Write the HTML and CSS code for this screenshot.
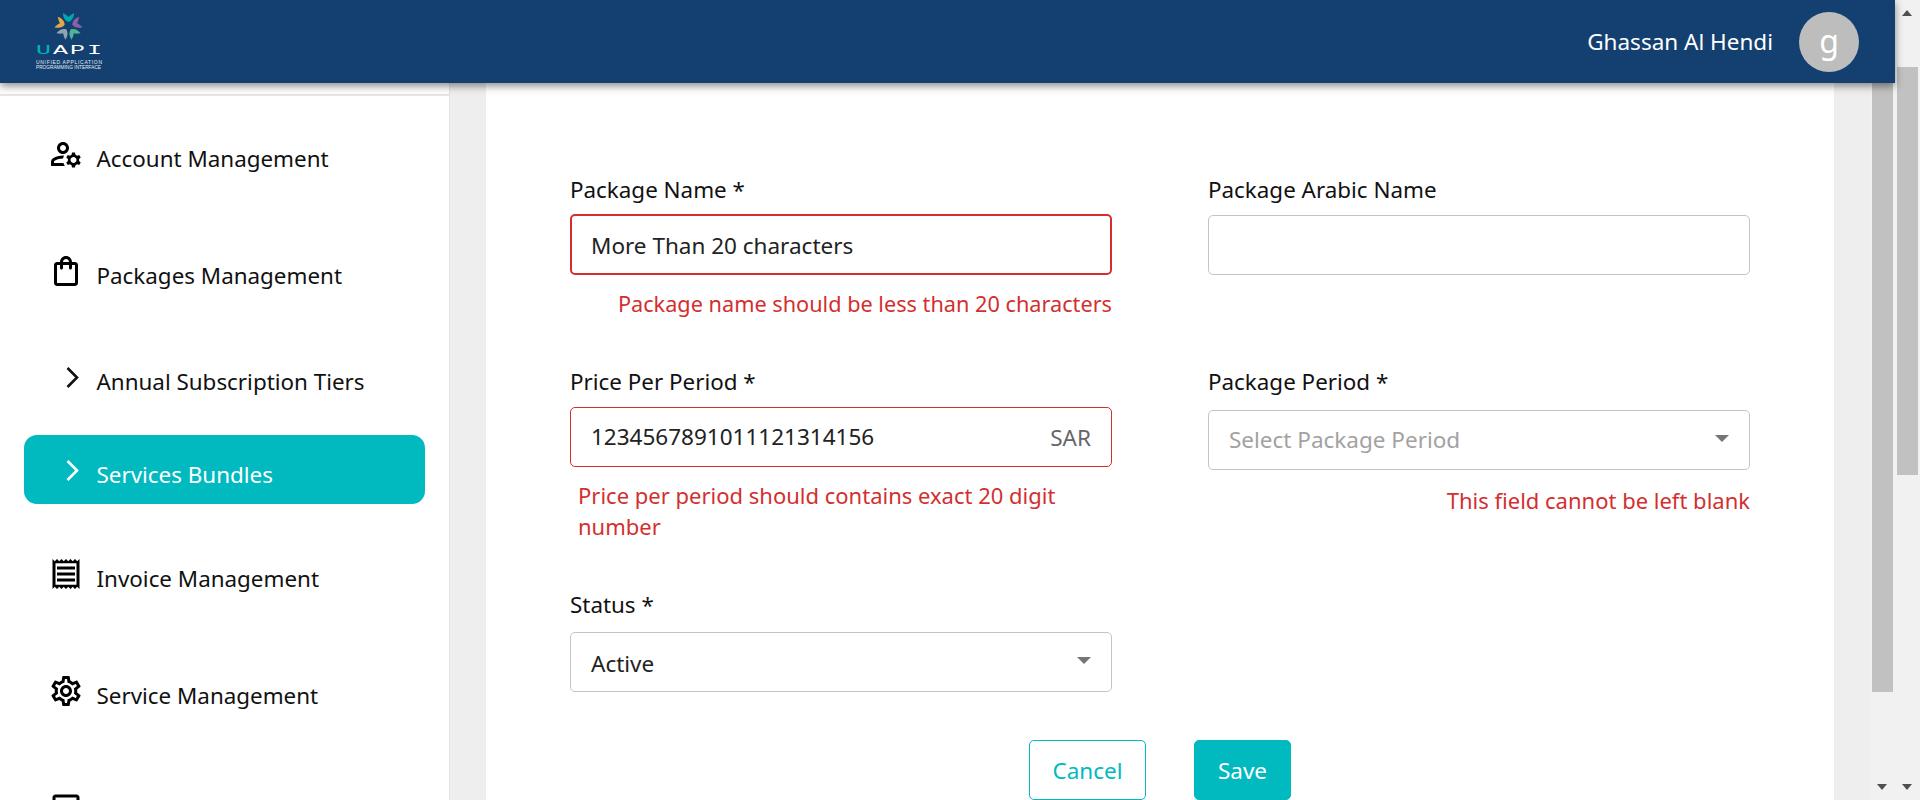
FILE: index.html
```html
<!DOCTYPE html>
<html lang="en">
<head>
<meta charset="utf-8">
<title>Services Bundles</title>
<link rel="stylesheet" href="styles.css">
</head>
<body>
<div class="app">
  <div class="window">
    <header class="topbar">
      <svg class="logo" viewBox="0 0 72 83" width="72" height="83" aria-label="UAPI">
        <g transform="translate(32.5 26)">
          <path class="petal p1" d="M-5.5 -13C-5.5 -8 -3 -5 0 -4C3 -5 5.5 -8 5.5 -13C4 -12 1.5 -11 0 -9C-1.5 -11 -4 -12 -5.5 -13Z"/>
          <path class="petal p2" transform="rotate(72)" d="M-5.5 -13C-5.5 -8 -3 -5 0 -4C3 -5 5.5 -8 5.5 -13C4 -12 1.5 -11 0 -9C-1.5 -11 -4 -12 -5.5 -13Z"/>
          <path class="petal p3" transform="rotate(144)" d="M-5.5 -13C-5.5 -8 -3 -5 0 -4C3 -5 5.5 -8 5.5 -13C4 -12 1.5 -11 0 -9C-1.5 -11 -4 -12 -5.5 -13Z"/>
          <path class="petal p4" transform="rotate(216)" d="M-5.5 -13C-5.5 -8 -3 -5 0 -4C3 -5 5.5 -8 5.5 -13C4 -12 1.5 -11 0 -9C-1.5 -11 -4 -12 -5.5 -13Z"/>
          <path class="petal p5" transform="rotate(288)" d="M-5.5 -13C-5.5 -8 -3 -5 0 -4C3 -5 5.5 -8 5.5 -13C4 -12 1.5 -11 0 -9C-1.5 -11 -4 -12 -5.5 -13Z"/>
        </g>
        <text class="wordmark wm-u" x="0" y="54" textLength="15" lengthAdjust="spacingAndGlyphs">U</text>
        <text class="wordmark" x="17" y="54" textLength="15" lengthAdjust="spacingAndGlyphs">A</text>
        <text class="wordmark" x="34" y="54" textLength="15" lengthAdjust="spacingAndGlyphs">P</text>
        <text class="wordmark" x="51" y="54" textLength="15" lengthAdjust="spacingAndGlyphs">I</text>
        <text class="tagline" x="0" y="63.5" textLength="66" lengthAdjust="spacing">UNIFIED APPLICATION</text>
        <text class="tagline" x="0" y="69" textLength="65" lengthAdjust="spacingAndGlyphs">PROGRAMMING INTERFACE</text>
      </svg>
      <div class="user">
        <span class="user-name">Ghassan Al Hendi</span>
        <span class="avatar">g</span>
      </div>
    </header>
    <div class="body-row">
      <aside class="sidebar">
        <div class="sidebar-top"></div>
        <nav class="nav">
          <a class="nav-item item-account">
            <svg class="icon" viewBox="0 0 24 24"><path d="M4 18v-.65c0-.34.16-.66.41-.81C6.1 15.53 8.03 15 10 15c.03 0 .05 0 .08.01.1-.7.3-1.37.59-1.98-.22-.02-.44-.03-.67-.03-2.42 0-4.68.67-6.61 1.82C2.51 15.34 2 16.32 2 17.35V20h9.26c-.42-.6-.75-1.28-.97-2H4zm6-6c2.21 0 4-1.79 4-4s-1.79-4-4-4-4 1.79-4 4 1.79 4 4 4zm0-6c1.1 0 2 .9 2 2s-.9 2-2 2-2-.9-2-2 .9-2 2-2zm10.75 10c0-.22-.03-.42-.06-.63l1.14-1.01-1-1.73-1.45.49c-.32-.27-.68-.48-1.08-.63L18 11h-2l-.3 1.49c-.4.15-.76.36-1.08.63l-1.45-.49-1 1.73 1.14 1.01c-.03.21-.06.41-.06.63s.03.42.06.63l-1.14 1.01 1 1.73 1.45-.49c.32.27.68.48 1.08.63L16 21h2l.3-1.49c.4-.15.76-.36 1.08-.63l1.45.49 1-1.73-1.14-1.01c.03-.21.06-.41.06-.63zM17 18c-1.1 0-2-.9-2-2s.9-2 2-2 2 .9 2 2-.9 2-2 2z"/></svg>
            <span class="nav-label">Account Management</span>
          </a>
          <a class="nav-item item-packages">
            <svg class="icon" viewBox="0 0 24 24"><path d="M18 6h-2c0-2.21-1.79-4-4-4S8 3.79 8 6H6c-1.1 0-2 .9-2 2v12c0 1.1.9 2 2 2h12c1.1 0 2-.9 2-2V8c0-1.1-.9-2-2-2zm-6-2c1.1 0 2 .9 2 2h-4c0-1.1.9-2 2-2zm6 16H6V8h2v2c0 .55.45 1 1 1s1-.45 1-1V8h4v2c0 .55.45 1 1 1s1-.45 1-1V8h2v12z"/></svg>
            <span class="nav-label">Packages Management</span>
          </a>
          <a class="sub-item">
            <svg class="chevron" viewBox="0 0 36 36"><path d="M19.5 9L29 18.5L19.5 28"/></svg>
            <span class="nav-label">Annual Subscription Tiers</span>
          </a>
          <a class="sub-item is-active">
            <svg class="chevron" viewBox="0 0 36 36"><path d="M19.5 9L29 18.5L19.5 28"/></svg>
            <span class="nav-label">Services Bundles</span>
          </a>
          <a class="nav-item item-invoice">
            <svg class="icon" viewBox="0 0 24 24"><path d="M19.5 3.5L18 2l-1.5 1.5L15 2l-1.5 1.5L12 2l-1.5 1.5L9 2 7.5 3.5 6 2 4.5 3.5 3 2v20l1.5-1.5L6 22l1.5-1.5L9 22l1.5-1.5L12 22l1.5-1.5L15 22l1.5-1.5L18 22l1.5-1.5L21 22V2l-1.5 1.5zM19 19.09H5V4.91h14v14.18zM6 15h12v2H6zm0-4h12v2H6zm0-4h12v2H6z"/></svg>
            <span class="nav-label">Invoice Management</span>
          </a>
          <a class="nav-item">
            <svg class="icon" viewBox="0 0 24 24"><path d="M19.43 12.98c.04-.32.07-.64.07-.98 0-.34-.03-.66-.07-.98l2.11-1.65c.19-.15.24-.42.12-.64l-2-3.46c-.09-.16-.26-.25-.44-.25-.06 0-.12.01-.17.03l-2.49 1c-.52-.4-1.08-.73-1.69-.98l-.38-2.65C14.46 2.18 14.25 2 14 2h-4c-.25 0-.46.18-.49.42l-.38 2.65c-.61.25-1.17.59-1.69.98l-2.49-1c-.06-.02-.12-.03-.18-.03-.17 0-.34.09-.43.25l-2 3.46c-.13.22-.07.49.12.64l2.11 1.65c-.04.32-.07.65-.07.98 0 .33.03.66.07.98l-2.11 1.65c-.19.15-.24.42-.12.64l2 3.46c.09.16.26.25.44.25.06 0 .12-.01.17-.03l2.49-1c.52.4 1.08.73 1.69.98l.38 2.65c.03.24.24.42.49.42h4c.25 0 .46-.18.49-.42l.38-2.65c.61-.25 1.17-.59 1.69-.98l2.49 1c.06.02.12.03.18.03.17 0 .34-.09.43-.25l2-3.46c.12-.22.07-.49-.12-.64l-2.11-1.65zm-1.98-1.71c.04.31.05.52.05.73 0 .21-.02.43-.05.73l-.14 1.13.89.7 1.08.84-.7 1.21-1.27-.51-1.04-.42-.9.68c-.43.32-.84.56-1.25.73l-1.06.43-.16 1.13-.2 1.35h-1.4l-.19-1.35-.16-1.13-1.06-.43c-.43-.18-.83-.41-1.23-.71l-.91-.7-1.06.43-1.27.51-.7-1.21 1.08-.84.89-.7-.14-1.13c-.03-.31-.05-.54-.05-.74s.02-.43.05-.73l.14-1.13-.89-.7-1.08-.84.7-1.21 1.27.51 1.04.42.9-.68c.43-.32.84-.56 1.25-.73l1.06-.43.16-1.13.2-1.35h1.39l.19 1.35.16 1.13 1.06.43c.43.18.83.41 1.23.71l.91.7 1.06-.43 1.27-.51.7 1.21-1.07.85-.89.7.14 1.13zM12 8c-2.21 0-4 1.79-4 4s1.79 4 4 4 4-1.79 4-4-1.79-4-4-4zm0 6c-1.1 0-2-.9-2-2s.9-2 2-2 2 .9 2 2-.9 2-2 2z"/></svg>
            <span class="nav-label">Service Management</span>
          </a>
          <a class="nav-item">
            <svg class="icon" viewBox="0 0 24 24"><path d="M19 5v14H5V5h14m0-2H5c-1.1 0-2 .9-2 2v14c0 1.1.9 2 2 2h14c1.1 0 2-.9 2-2V5c0-1.1-.9-2-2-2z"/></svg>
          </a>
        </nav>
      </aside>
      <main class="content">
        <section class="card">
          <form class="form">
            <div class="form-grid">
              <div class="field field-a">
                <label class="label">Package Name *</label>
                <div class="control is-focus-error"><span class="value value-low">More Than 20 characters</span></div>
                <p class="error align-right">Package name should be less than 20 characters</p>
              </div>
              <div class="field field-b">
                <label class="label">Package Arabic Name</label>
                <div class="control"></div>
              </div>
              <div class="field field-c">
                <label class="label">Price Per Period *</label>
                <div class="control is-error"><span class="value">1234567891011121314156</span><span class="suffix">SAR</span></div>
                <p class="error error-wrap">Price per period should contains exact 20 digit number</p>
              </div>
              <div class="field field-d">
                <label class="label">Package Period *</label>
                <div class="control"><span class="placeholder">Select Package Period</span><span class="caret"></span></div>
                <p class="error align-right">This field cannot be left blank</p>
              </div>
              <div class="field field-e">
                <label class="label">Status *</label>
                <div class="control"><span class="value value-low">Active</span><span class="caret"></span></div>
              </div>
            </div>
            <div class="actions">
              <button type="button" class="btn btn-outline">Cancel</button>
              <button type="button" class="btn btn-solid">Save</button>
            </div>
          </form>
        </section>
        <div class="gutter"></div>
        <div class="scrollbar inner-bar">
          <div class="thumb"></div>
          <span class="arrow-down"></span>
        </div>
      </main>
    </div>
  </div>
  <div class="scrollbar outer-bar">
    <span class="arrow-up"></span>
    <div class="thumb"></div>
    <span class="arrow-down"></span>
  </div>
</div>
</body>
</html>
```
FILE: styles.css
```css
* { box-sizing: border-box; }
html, body { margin: 0; height: 100%; overflow: hidden; }
body { font-family: "Noto Sans", "Open Sans", sans-serif; color: #111; background: #fff; }
.app { display: flex; width: 1920px; height: 800px; overflow: hidden; }
.window { width: 1895px; height: 800px; display: flex; flex-direction: column; }

.topbar {
  position: relative; z-index: 2; flex: none; height: 83px;
  background: #134070; display: flex; align-items: center; justify-content: space-between;
  padding: 0 36px; box-shadow: 0 3px 8px rgba(0,0,0,.45);
}
.logo { display: block; }
.petal.p1 { fill: #00a7ad; } .petal.p2 { fill: #8a5fa8; } .petal.p3 { fill: #4fb592; }
.petal.p4 { fill: #8fa6ae; } .petal.p5 { fill: #e3a848; }
.wordmark { font: 400 12.5px "Liberation Mono", monospace; fill: #fff; }
.wm-u { fill: #00b4bc; }
.tagline { font: 400 5px "Liberation Sans", sans-serif; fill: #e6edf3; }
.user { display: flex; align-items: center; gap: 26px; }
.user-name { color: #fff; font-size: 22.5px; line-height: 26px; }
.avatar {
  width: 60px; height: 60px; border-radius: 50%; background: #bdbdbd; color: #fff;
  font-size: 32px; line-height: 58px; text-align: center; display: block;
}

.body-row { flex: 1; min-height: 0; display: flex; }
.sidebar { flex: none; width: 450px; background: #fff; border-right: 1px solid #e2e2e2; overflow: hidden; }
.sidebar-top { height: 13px; border-bottom: 2px solid #e6e6e6; }
.nav { display: flex; flex-direction: column; padding: 40px 24px 0; }
.nav-item { display: flex; align-items: flex-start; padding-left: 24px; height: 36px; margin-bottom: 81px; flex: none; }
.item-packages { margin-bottom: 53px; }
.sub-item {
  display: flex; align-items: center; height: 69px; margin-bottom: 24px; flex: none;
  width: 401px; padding-left: 24px; border-radius: 13px;
}
.sub-item.is-active { background: #00bac0; color: #fff; margin-bottom: 52px; }
.icon { width: 36px; height: 36px; flex: none; fill: #000; }
.chevron { width: 36px; height: 36px; flex: none; fill: none; stroke: currentColor; stroke-width: 2.6; }
.nav-label { font-size: 22.4px; line-height: 26px; margin-left: 12.5px; white-space: nowrap; padding-top: 10px; }

.content { flex: 1; min-width: 0; display: flex; background: #eee; padding-left: 36px; }
.card { flex: none; width: 1348px; background: #fff; }
.gutter { flex: none; width: 36px; }
.form { padding: 94px 84px 0; }
.form-grid { display: grid; grid-template-columns: 542px 542px; column-gap: 96px; }
.field { display: flex; flex-direction: column; }
.field-a, .field-b { height: 192px; }
.field-c, .field-d { height: 223px; }
.field-e { height: 148px; }
.label { font-size: 22.4px; line-height: 26px; margin-bottom: 11px; display: block; color: #111; }
.field-b .label { margin-bottom: 12px; }
.field-c .label { margin-bottom: 12px; }
.field-d .label { margin-bottom: 15px; }
.field-e .label { margin-bottom: 14px; }
.control {
  height: 60px; border: 1px solid #c4c4c4; border-radius: 5px; background: #fff;
  display: flex; align-items: center; justify-content: space-between; padding: 0 20px; flex: none;
}
.control.is-error { border-color: #d32f2f; }
.control.is-focus-error { border: 2px solid #d32f2f; padding: 0 19px; height: 61px; }
.value { font-size: 22.5px; line-height: 30px; color: #222; }
.value-low { padding-top: 3px; }
.suffix { font-size: 22.5px; line-height: 30px; color: #666; padding-top: 1px; }
.placeholder { font-size: 22.5px; line-height: 30px; color: #a2a2a2; }
.caret { width: 0; height: 0; border-left: 7.5px solid transparent; border-right: 7.5px solid transparent; border-top: 7.5px solid #757575; margin-top: -4px; }
.error { margin: 13px 0 0; color: #d32f2f; font-size: 22px; line-height: 31px; }
.field-a .error { font-size: 21.7px; }
.field-d .error { margin-top: 15px; }
.align-right { text-align: right; }
.error-wrap { padding-left: 8px; padding-right: 40px; }
.actions { display: flex; justify-content: flex-end; gap: 48px; padding-right: 459px; }
.btn { height: 60px; font: 400 22.5px "Noto Sans", "Open Sans", sans-serif; border-radius: 5px; padding: 0; cursor: pointer; }
.btn-outline { width: 117px; background: #fff; border: 1px solid #00bac0; color: #00bac0; }
.btn-solid { width: 97px; background: #00bac0; border: 1px solid #00bac0; color: #fff; }

.scrollbar { position: relative; flex: none; width: 25px; height: 100%; background: #f1f1f1; }
.thumb { background: #c1c1c1; width: 21px; margin-left: 2px; }
.inner-bar .thumb { height: 609px; }
.outer-bar { height: 800px; padding-top: 67px; }
.outer-bar .thumb { height: 408px; }
.arrow-up, .arrow-down { position: absolute; left: 7px; width: 0; height: 0; border-left: 5.5px solid transparent; border-right: 5.5px solid transparent; }
.arrow-up { top: 10px; border-bottom: 6px solid #505050; }
.arrow-down { bottom: 10px; border-top: 6px solid #505050; }
```
